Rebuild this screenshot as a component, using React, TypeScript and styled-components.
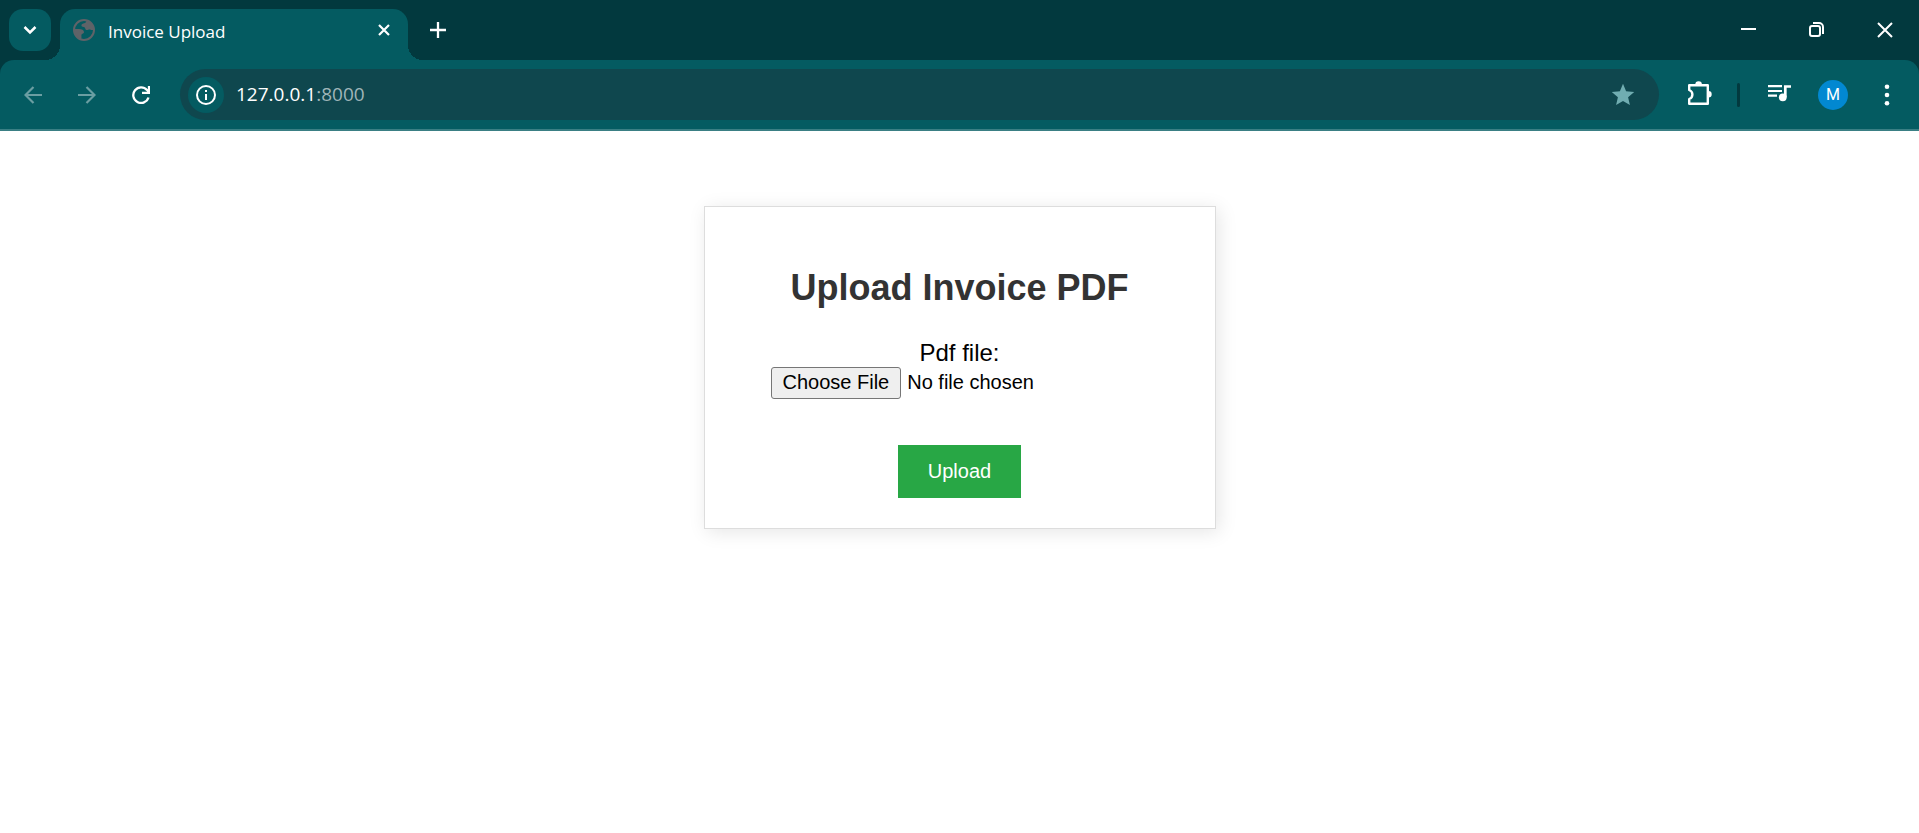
import React from 'react';
import styled, { createGlobalStyle } from 'styled-components';

const colors = {
  strip: '#02393e',
  toolbar: '#045b61',
  field: '#0f474e',
  edge: '#3a7f84',
  dim: '#6b9ea2',
};

const GlobalStyle = createGlobalStyle`
  *, *::before, *::after { box-sizing: border-box; }
  body { margin: 0; background: #fff; color: #000; font-family: "Liberation Sans", Arial, sans-serif; }
  button { padding: 0; border: 0; background: none; color: inherit; font-family: inherit; }
`;

const Browser = styled.div`
  display: flex;
  flex-direction: column;
  min-height: 100vh;
`;

const Chrome = styled.header`
  background: ${colors.strip};
  color: #fff;
  font-family: "Open Sans", "Noto Sans", sans-serif;
`;

const TabStrip = styled.div`
  display: flex;
  height: 60px;
  padding: 9px 0 0 9px;
`;

const TabSearch = styled.button`
  display: grid;
  place-items: center;
  width: 42px;
  height: 42px;
  margin-right: 9px;
  border-radius: 14px;
  background: ${colors.toolbar};
`;

const Tab = styled.div`
  position: relative;
  display: flex;
  align-items: center;
  width: 348px;
  padding: 0 15px 9px 13px;
  border-radius: 15px 15px 0 0;
  background: ${colors.toolbar};

  &::before, &::after {
    content: "";
    position: absolute;
    bottom: 0;
    width: 15px;
    height: 15px;
  }
  &::before {
    right: 100%;
    background: radial-gradient(circle at 0 0, transparent 15px, ${colors.toolbar} 15px);
  }
  &::after {
    left: 100%;
    background: radial-gradient(circle at 100% 0, transparent 15px, ${colors.toolbar} 15px);
  }
`;

const TabTitle = styled.span`
  flex: 1;
  margin-left: 13px;
  padding-top: 3px;
  font-size: 17px;
  line-height: 24px;
  white-space: nowrap;
`;

const TabClose = styled.button`
  display: grid;
  place-items: center;
  width: 18px;
  height: 18px;
`;

const NewTab = styled.button`
  display: grid;
  place-items: center;
  width: 42px;
  height: 42px;
  margin-left: 9px;
`;

const WindowControls = styled.div`
  display: flex;
  margin: -9px 0 0 auto;
`;

const WindowButton = styled.button`
  display: grid;
  place-items: center;
  width: 68px;
  height: 60px;
`;

const Toolbar = styled.div`
  display: flex;
  align-items: center;
  height: 71px;
  padding: 0 5px 0 6px;
  border-bottom: 2px solid ${colors.edge};
  border-radius: 14px 14px 0 0;
  background: ${colors.toolbar};
`;

const ToolButton = styled.button<{ $dim?: boolean }>`
  display: grid;
  place-items: center;
  flex: none;
  width: 54px;
  height: 51px;
  color: ${(p) => (p.$dim ? colors.dim : '#fff')};
`;

const AddressBar = styled.div`
  display: flex;
  align-items: center;
  flex: 1;
  height: 51px;
  margin: 0 14px 0 12px;
  padding: 0 18px 0 8px;
  border-radius: 26px;
  background: ${colors.field};
`;

const SiteInfo = styled.button`
  display: grid;
  place-items: center;
  width: 36px;
  height: 36px;
  margin-right: 12px;
  border-radius: 50%;
  background: ${colors.toolbar};
`;

const Address = styled.div`
  flex: 1;
  padding-bottom: 2px;
  font-size: 19px;
  line-height: 26px;
`;

const Port = styled.span`
  color: #9fb5b8;
`;

const Bookmark = styled.button`
  display: grid;
  place-items: center;
  width: 36px;
  height: 36px;
  color: #70adb1;
`;

const Divider = styled.span`
  width: 3px;
  height: 24px;
  margin: 0 12px 0 10px;
  border-radius: 2px;
  background: ${colors.strip};
`;

const Avatar = styled.span`
  display: grid;
  place-items: center;
  width: 30px;
  height: 30px;
  border-radius: 50%;
  background: #0288d1;
  font-family: Roboto, sans-serif;
  font-size: 16px;
  line-height: 30px;
`;

const Page = styled.main`
  display: flex;
  flex: 1;
  justify-content: center;
  align-items: flex-start;
  padding: 75px 20px;
`;

const Card = styled.form`
  display: flex;
  flex-direction: column;
  align-items: center;
  width: 512px;
  max-width: 100%;
  padding: 30px;
  border: 1px solid #ddd;
  background: #fff;
  box-shadow: 3px 3px 18px rgba(0, 0, 0, 0.1);
`;

const Title = styled.h1`
  margin: 30px 0;
  color: #333;
  font-size: 36px;
  line-height: 42px;
`;

const FieldLabel = styled.label`
  font-size: 24px;
  line-height: 28px;
`;

const FileField = styled.input`
  width: 378px;
  max-width: 100%;
  height: 32px;
  margin-bottom: 46px;
  font-family: inherit;
  font-size: 20px;

  &::file-selector-button {
    height: 32px;
    margin: 0 6px 0 0;
    padding: 0 11px 2px;
    border: 1px solid #767676;
    border-radius: 3px;
    background: #efefef;
    color: #000;
    font-family: inherit;
    font-size: 20px;
  }
`;

const Submit = styled.button`
  && {
    padding: 15px 30px;
    background: #28a745;
    color: #fff;
    font-size: 20px;
    line-height: 23px;
  }
`;

const stroke = { fill: 'none', stroke: 'currentColor', strokeWidth: 2 } as const;

const GlobeIcon = () => (
  <svg width="22" height="22" viewBox="0 0 22 22" fill="#5f6368">
    <circle cx="11" cy="11" r="10" fill="none" stroke="#5f6368" strokeWidth="2" />
    <path d="M13.500 1.500c-.3 1.700-1 2.500-2.500 2.800-2 .5-2.800 1.200-2.500 2.700.3 1.200 2 .7 3 1.300 1 .7.5 2.200 1.800 2.700 1.500.4 2.300-.8 3.700-.5 1.200.4 2 .8 4 .5C21.300 6 18 2 13.500 1.500z" />
    <path d="M1.500 10h4.500c3 0 4.800 1.200 5 3 .2 1.500-2 1.500-2.500 2.500-.4 1.200.5 3-.5 5C4.500 19.500 1 15 1.500 10z" />
  </svg>
);

export default function App() {
  return (
    <Browser>
      <GlobalStyle />
      <Chrome>
        <TabStrip>
          <TabSearch aria-label="Search tabs">
            <svg width="14" height="10" viewBox="0 0 14 10" {...stroke} strokeWidth={2.5}><path d="M1.500 2L7 7.500 12.500 2" /></svg>
          </TabSearch>
          <Tab>
            <GlobeIcon />
            <TabTitle>Invoice Upload</TabTitle>
            <TabClose aria-label="Close tab">
              <svg width="12" height="12" viewBox="0 0 12 12" {...stroke} strokeWidth={2.2}><path d="M1 1l10 10M11 1L1 11" /></svg>
            </TabClose>
          </Tab>
          <NewTab aria-label="New tab">
            <svg width="16" height="16" viewBox="0 0 16 16" {...stroke} strokeWidth={2.3}><path d="M8 0v16M0 8h16" /></svg>
          </NewTab>
          <WindowControls>
            <WindowButton aria-label="Minimize">
              <svg width="16" height="16" viewBox="0 0 16 16" {...stroke}><path d="M0 7h15" /></svg>
            </WindowButton>
            <WindowButton aria-label="Restore">
              <svg width="16" height="16" viewBox="0 0 16 16" {...stroke}>
                <rect x="1" y="4" width="10" height="10" rx="2" />
                <path d="M4 1h6a4 4 0 0 1 4 4v7" />
              </svg>
            </WindowButton>
            <WindowButton aria-label="Close">
              <svg width="16" height="16" viewBox="0 0 16 16" {...stroke}><path d="M1 1l14 14M15 1L1 15" /></svg>
            </WindowButton>
          </WindowControls>
        </TabStrip>
        <Toolbar>
          <ToolButton $dim aria-label="Back">
            <svg width="18" height="18" viewBox="0 0 18 18" {...stroke} strokeWidth={2.2}><path d="M18 9H2M9.500 1L1.500 9l8 8" /></svg>
          </ToolButton>
          <ToolButton $dim aria-label="Forward">
            <svg width="18" height="18" viewBox="0 0 18 18" {...stroke} strokeWidth={2.2}><path d="M0 9h16M8.500 1l8 8-8 8" /></svg>
          </ToolButton>
          <ToolButton aria-label="Reload">
            <svg width="18" height="18" viewBox="0 0 18 18" {...stroke} strokeWidth={2.3}>
              <path d="M16.500 11.500A7.800 7.800 0 1 1 15 4l1.500 1.500M17 0v6.800h-7" />
            </svg>
          </ToolButton>
          <AddressBar>
            <SiteInfo aria-label="View site information">
              <svg width="20" height="20" viewBox="0 0 20 20" {...stroke}>
                <circle cx="10" cy="10" r="9" /><path d="M10 9v6M10 5v2" />
              </svg>
            </SiteInfo>
            <Address>127.0.0.1<Port>:8000</Port></Address>
            <Bookmark aria-label="Edit bookmark">
              <svg width="24" height="24" viewBox="0 0 24 24" fill="currentColor">
                <path d="M12 .8l3.100 7.400 8.100.7-6.100 5.300 1.800 7.900L12 17.900l-6.900 4.200 1.800-7.900L.8 8.900l8.100-.7z" />
              </svg>
            </Bookmark>
          </AddressBar>
          <ToolButton aria-label="Extensions">
            <svg width="26" height="28" viewBox="0 -1 26 28">
              <path {...stroke} strokeWidth={2.4} strokeLinejoin="round" d="M2.200 3.200h18.600v18.600H2.200V17c2-.8 3.200-2.300 3.200-4.500S4.200 8.800 2.200 8z" />
              <path fill="currentColor" d="M8.300 2.500a3.300 3.300 0 0 1 6.600 0zM21.500 9a3.200 3.300 0 0 1 0 6.600z" />
            </svg>
          </ToolButton>
          <Divider />
          <ToolButton aria-label="Media controls">
            <svg width="24" height="22" viewBox="0 0 24 22">
              <path {...stroke} strokeWidth={2.2} d="M1 2.200h14M1 7h14M1 11.700h9" />
              <path {...stroke} strokeWidth={2.700} d="M18.300 13V2.500H24" />
              <circle cx="15.800" cy="13.300" r="3.900" fill="currentColor" />
            </svg>
          </ToolButton>
          <ToolButton aria-label="Profile"><Avatar>M</Avatar></ToolButton>
          <ToolButton aria-label="Menu">
            <svg width="6" height="22" viewBox="0 0 6 22" fill="currentColor">
              <circle cx="3" cy="2.700" r="2.300" /><circle cx="3" cy="11" r="2.300" /><circle cx="3" cy="19.300" r="2.300" />
            </svg>
          </ToolButton>
        </Toolbar>
      </Chrome>
      <Page>
        <Card onSubmit={(e) => e.preventDefault()}>
          <Title>Upload Invoice PDF</Title>
          <FieldLabel htmlFor="pdf-file">Pdf file:</FieldLabel>
          <FileField id="pdf-file" type="file" accept="application/pdf" />
          <Submit type="submit">Upload</Submit>
        </Card>
      </Page>
    </Browser>
  );
}
